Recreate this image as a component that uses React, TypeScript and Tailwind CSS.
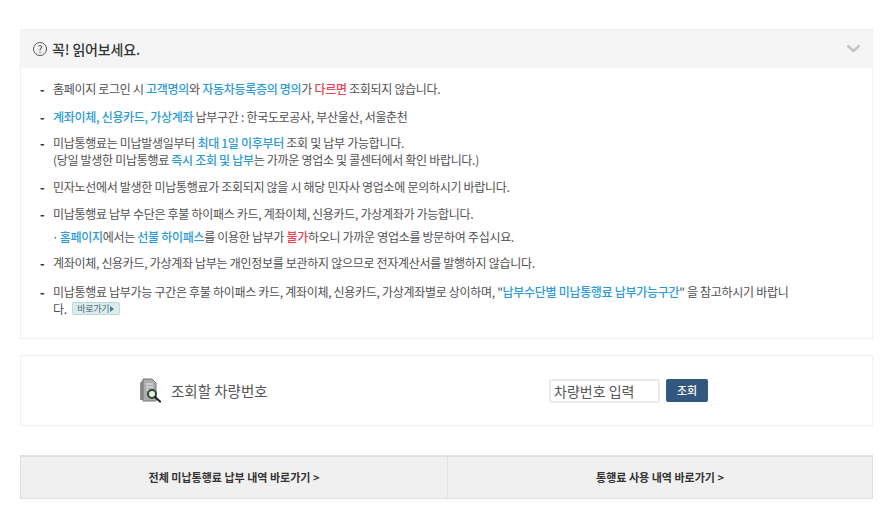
const Blue = ({ children }: { children: React.ReactNode }) => (
  <span className="text-[#2d9ad8] font-medium">{children}</span>
);
const Red = ({ children }: { children: React.ReactNode }) => (
  <span className="text-[#f0414f] font-medium">{children}</span>
);

const Item = ({ children, className = "" }: { children: React.ReactNode; className?: string }) => (
  <li className={`relative pl-[13px] ${className}`}>
    <span className="absolute left-0 top-0 font-black text-[#333]">-</span>
    {children}
  </li>
);

const ReportIcon = () => (
  <svg width="23" height="25" viewBox="0 0 23 25" className="shrink-0">
    <path d="M1 5l3-3v20H1z" fill="#8a8a8a" />
    <path d="M4 1h9l4 4v18H4z" fill="#adadad" stroke="#777" strokeWidth="1" />
    <path d="M7 6h7M7 9h7M7 12h3" stroke="#eee" strokeWidth="1" />
    <circle cx="13" cy="16" r="4" fill="#e8efe6" stroke="#2c4a34" strokeWidth="2" />
    <path d="M16 19l5 4.500" stroke="#222" strokeWidth="2.200" strokeLinecap="round" />
  </svg>
);

export default function App() {
  return (
    <div className="w-[894px] h-[516px] bg-white overflow-hidden pt-[29px] px-5 font-['Noto_Sans_CJK_KR','Noto_Sans',sans-serif] text-[#505050]">
      <div className="w-[853px] h-[310px] border border-[#f0f0f0]">
        <div className="h-[38px] bg-[#f5f5f5] flex items-center pl-[12px] pr-[11px]">
          <span className="w-[14px] h-[14px] rounded-full border border-[#555] flex items-center justify-center text-[10px] leading-none text-[#444]">?</span>
          <span className="ml-[5px] text-[14px] font-medium text-[#333] tracking-[-0.15px]">꼭! 읽어보세요.</span>
          <svg width="15" height="9" viewBox="0 0 15 9" className="ml-auto -mt-[1px]">
            <path d="M1.5 1.5l6 5.5 6-5.500" fill="none" stroke="#c4c4c4" strokeWidth="2.400" />
          </svg>
        </div>
        <ul className="pl-[19px] w-[775px] pt-[12px] text-[12px] leading-[17px] break-all tracking-[-0.3px]">
          <Item>홈페이지 로그인 시 <Blue>고객명의</Blue>와 <Blue>자동차등록증의 명의</Blue>가 <Red>다르면</Red> 조회되지 않습니다.</Item>
          <Item className="mt-[11px]"><Blue>계좌이체, 신용카드, 가상계좌</Blue> 납부구간 : 한국도로공사, 부산울산, 서울춘천</Item>
          <Item className="mt-[9px]">
            미납통행료는 미납발생일부터 <Blue>최대 1일 이후부터</Blue> 조회 및 납부 가능합니다.<br />
            (당일 발생한 미납통행료 <Blue>즉시 조회 및 납부</Blue>는 가까운 영업소 및 콜센터에서 확인 바랍니다.)
          </Item>
          <Item className="mt-[10px]">민자노선에서 발생한 미납통행료가 조회되지 않을 시 해당 민자사 영업소에 문의하시기 바랍니다.</Item>
          <Item className="mt-[10px]">미납통행료 납부 수단은 후불 하이패스 카드, 계좌이체, 신용카드, 가상계좌가 가능합니다.</Item>
          <li className="pl-[12px] mt-[6px]">
            <span className="mr-[2px] -tracking-[1px]">·</span><Blue>홈페이지</Blue>에서는 <Blue>선불 하이패스</Blue>를 이용한 납부가 <Red>불가</Red>하오니 가까운 영업소를 방문하여 주십시요.
          </li>
          <Item className="mt-[9px]">계좌이체, 신용카드, 가상계좌 납부는 개인정보를 보관하지 않으므로 전자계산서를 발행하지 않습니다.</Item>
          <Item className="mt-[12px]">
            미납통행료 납부가능 구간은 후불 하이패스 카드, 계좌이체, 신용카드, 가상계좌별로 상이하며, "<Blue>납부수단별 미납통행료 납부가능구간</Blue>" 을 참고하시기 바랍니다.
            <span className="inline-flex items-center align-[2px] ml-[5px] h-[13px] w-[48px] justify-center rounded-[2px] border border-[#bcd9dc] bg-[#dcecee] text-[9px] leading-none text-[#4a6f78] tracking-[-0.3px]">
              바로가기
              <span className="ml-[1px] w-0 h-0 border-y-[3px] border-y-transparent border-l-[4px] border-l-[#3d7f90]" />
            </span>
          </Item>
        </ul>
      </div>

      <div className="mt-4 w-[853px] h-[71px] border border-[#f0f0f0] flex items-center">
        <div className="w-[365px] flex items-center pl-[118px]">
          <ReportIcon />
          <span className="ml-[9px] text-[14.5px] text-[#555]">조회할 차량번호</span>
        </div>
        <div className="flex-1 flex items-center pl-[163px]">
          <input
            readOnly
            placeholder="차량번호 입력"
            className="w-[111px] h-[24px] border-2 border-[#eaeaea] rounded-[3px] px-[3px] text-[14px] placeholder-[#555] outline-none"
          />
          <button className="ml-[6px] w-[42px] h-[23px] rounded-[2px] bg-[#34577f] text-white text-[11px] font-medium">조회</button>
        </div>
      </div>

      <div className="mt-[29px] w-[853px] h-[44px] bg-[#f0f0f0] border border-[#e0e0e0] border-t-2 flex text-[11px] font-bold text-[#333]">
        <div className="w-[427px] border-r border-[#e2e2e2] flex items-center justify-center">전체 미납통행료 납부 내역 바로가기 &gt;</div>
        <div className="flex-1 flex items-center justify-center">통행료 사용 내역 바로가기 &gt;</div>
      </div>
    </div>
  );
}
